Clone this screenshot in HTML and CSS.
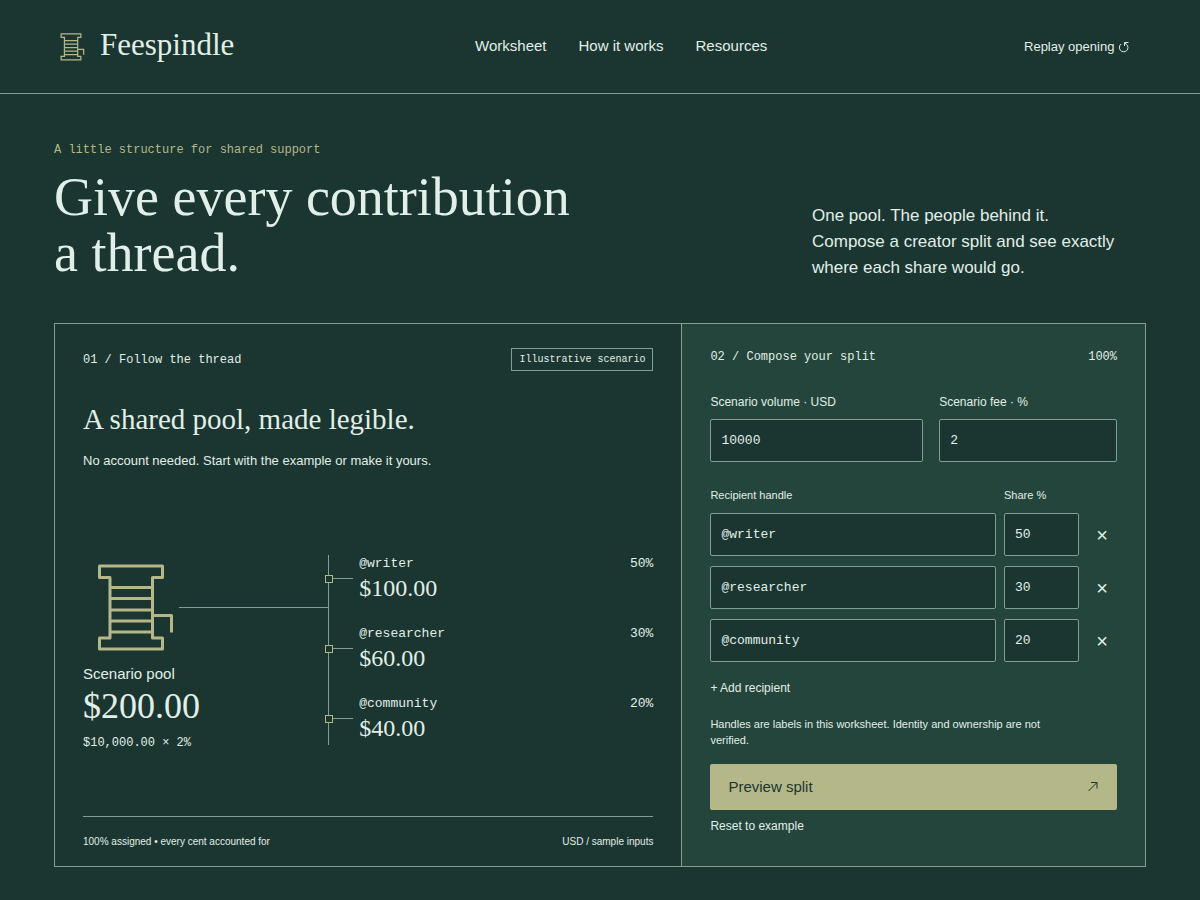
FILE: index.html
```html
<!DOCTYPE html>
<html lang="en">
<head>
<meta charset="utf-8">
<meta name="viewport" content="width=device-width, initial-scale=1">
<title>Feespindle</title>
<link rel="stylesheet" href="styles.css">
</head>
<body>
<header class="site-header">
  <a class="brand" href="#top">
    <svg class="brand-mark" viewBox="0 0 96 96" aria-hidden="true"><path d="M16.500 6H79.500V17.500H69.500V78H79.500V89H16.500V78H27V17.500H16.500ZM27 27.500H69.500M27 38.500H69.500M27 50H69.500M27 61H69.500M27 72H69.500M69.500 55.500H88.500V72.500"/></svg>
    <span>Feespindle</span>
  </a>
  <nav class="site-nav" aria-label="Main">
    <a href="#worksheet">Worksheet</a>
    <a href="#how">How it works</a>
    <a href="#resources">Resources</a>
  </nav>
  <button class="replay" type="button">Replay opening <svg viewBox="0 0 12 12" aria-hidden="true"><path d="M3.200 3A4.300 4.300 0 1 0 8.500 3.300L6.500 2M10.500 1.500H6.500V5"/></svg></button>
</header>
<main id="top">
  <section class="hero">
    <div>
      <p class="eyebrow">A little structure for shared support</p>
      <h1>Give every contribution<br>a thread.</h1>
    </div>
    <p class="lede">One pool. The people behind it.<br>Compose a creator split and see exactly where each share would go.</p>
  </section>
  <div class="workbench" id="worksheet">
    <section class="thread">
      <div class="thread-head">
        <span class="step">01 / Follow the thread</span>
        <span class="tag">Illustrative scenario</span>
      </div>
      <h2>A shared pool, made legible.</h2>
      <p class="intro">No account needed. Start with the example or make it yours.</p>
      <div class="diagram">
        <div class="pool">
          <div class="spool-row">
            <svg class="spool" viewBox="0 0 96 96" aria-hidden="true"><path d="M16.500 6H79.500V17.500H69.500V78H79.500V89H16.500V78H27V17.500H16.500ZM27 27.500H69.500M27 38.500H69.500M27 50H69.500M27 61H69.500M27 72H69.500M69.500 55.500H88.500V72.500"/></svg>
            <span class="feed"></span>
          </div>
          <span class="pool-label">Scenario pool</span>
          <strong class="pool-total">$200.00</strong>
          <span class="pool-math">$10,000.00 × 2%</span>
        </div>
        <ul class="branches">
          <li><span class="node"></span><div class="who"><span>@writer</span><span>50%</span></div><strong>$100.00</strong></li>
          <li><span class="node"></span><div class="who"><span>@researcher</span><span>30%</span></div><strong>$60.00</strong></li>
          <li><span class="node"></span><div class="who"><span>@community</span><span>20%</span></div><strong>$40.00</strong></li>
        </ul>
      </div>
      <div class="thread-foot"><span>100% assigned • every cent accounted for</span><span>USD / sample inputs</span></div>
    </section>
    <form class="composer">
      <div class="composer-head"><span>02 / Compose your split</span><output>100%</output></div>
      <div class="amounts">
        <label>Scenario volume · USD<input type="text" inputmode="decimal" value="10000"></label>
        <label>Scenario fee · %<input type="text" inputmode="decimal" value="2"></label>
      </div>
      <div class="recipients">
        <div class="row labels"><span id="h">Recipient handle</span><span id="s">Share %</span></div>
        <div class="row"><input type="text" aria-labelledby="h" value="@writer"><input type="text" aria-labelledby="s" value="50"><button type="button" aria-label="Remove @writer">×</button></div>
        <div class="row"><input type="text" aria-labelledby="h" value="@researcher"><input type="text" aria-labelledby="s" value="30"><button type="button" aria-label="Remove @researcher">×</button></div>
        <div class="row"><input type="text" aria-labelledby="h" value="@community"><input type="text" aria-labelledby="s" value="20"><button type="button" aria-label="Remove @community">×</button></div>
      </div>
      <button class="text-button" type="button">+ Add recipient</button>
      <p class="note">Handles are labels in this worksheet. Identity and ownership are not verified.</p>
      <button class="preview" type="button"><span>Preview split</span><svg viewBox="0 0 12 12" aria-hidden="true"><path d="M1.500 10L10 1.500M4 1.500H10V7.500"/></svg></button>
      <button class="text-button" type="reset">Reset to example</button>
    </form>
  </div>
</main>
</body>
</html>
```

FILE: styles.css
```css
:root {
  --ground: #1b3530;
  --panel: #24453c;
  --line: #7f9f93;
  --text: #e0efe7;
  --sage: #b4b888;
  --sans: "Liberation Sans", Arial, sans-serif;
  --mono: "Liberation Mono", "Courier New", monospace;
  --serif: "Liberation Serif", "Times New Roman", serif;
}
* { box-sizing: border-box; }
body {
  margin: 0;
  background: var(--ground);
  color: var(--text);
  font: 15px/24px var(--sans);
}
h1, h2, p, ul { margin: 0; padding: 0; font-weight: 400; }
strong { font-weight: 400; }
a { color: inherit; text-decoration: none; }
button { border: 0; padding: 0; background: none; color: inherit; font: inherit; cursor: pointer; }
svg { fill: none; stroke: currentColor; }

.site-header {
  display: flex;
  justify-content: space-between;
  align-items: center;
  padding: 25px 70px 28px 56px;
  border-bottom: 1px solid var(--line);
}
.brand { display: flex; align-items: center; gap: 14px; font: 31px/40px var(--serif); }
.brand-mark { width: 30px; height: 30px; color: var(--sage); stroke-width: 4; margin-top: 4px; }
.site-nav { display: flex; gap: 32px; padding-top: 2px; }
.replay { padding: 3px 0 0 16px; font-size: 13px; }
.replay svg { width: 12px; height: 12px; vertical-align: -2px; }

main { padding: 0 54px 33px; }
.hero {
  display: grid;
  grid-template-columns: 1fr 334px;
  align-items: end;
  padding: 47px 0 42px;
}
.eyebrow { font: 12px/18px var(--mono); color: var(--sage); margin-bottom: 10px; }
h1 { font: 54px/56px var(--serif); }
.lede { font-size: 17px; line-height: 26px; max-width: 310px; }

.workbench {
  display: grid;
  grid-template-columns: 627fr 464fr;
  border: 1px solid var(--line);
}
.thread { display: flex; flex-direction: column; padding: 24px 28px 16px; }
.thread-head { display: flex; justify-content: space-between; align-items: center; font: 12px/18px var(--mono); }
.tag { border: 1px solid var(--line); padding: 3px 7px; font-size: 10px; line-height: 15px; }
h2 { font: 29px/36px var(--serif); margin-top: 30px; }
.intro { font-size: 13px; line-height: 20px; margin-top: 14px; }
.diagram { display: grid; grid-template-columns: 245fr 325fr; margin-top: 84px; }
.pool { display: flex; flex-direction: column; }
.spool-row { display: flex; align-items: center; height: 105px; }
.spool { width: 96px; height: 96px; color: var(--sage); stroke-width: 3; stroke-linejoin: round; }
.feed { flex: 1; height: 1px; background: var(--line); }
.pool-label { line-height: 28px; }
.pool-total { font: 36px/36px var(--serif); }
.pool-math { font: 12px/18px var(--mono); margin-top: 10px; }
.branches { list-style: none; height: 190px; border-left: 1px solid var(--line); }
.branches li { position: relative; height: 70px; padding-left: 30px; }
.branches li::before { content: ""; position: absolute; left: 0; top: 23px; width: 24px; height: 1px; background: var(--line); }
.node { position: absolute; left: -4px; top: 20px; width: 8px; height: 8px; border: 1px solid var(--sage); background: var(--ground); }
.who { display: flex; justify-content: space-between; font: 13px/18px var(--mono); }
.branches strong { display: block; font: 24px/30px var(--serif); }
.thread-foot {
  display: flex;
  justify-content: space-between;
  margin-top: auto;
  border-top: 1px solid var(--line);
  padding-top: 16px;
  font-size: 10px;
  line-height: 17px;
}

.composer { background: var(--panel); border-left: 1px solid var(--line); padding: 24px 28px 31px; }
.composer-head { display: flex; justify-content: space-between; font: 12px/18px var(--mono); }
.amounts { display: grid; grid-template-columns: 213fr 178fr; gap: 16px; margin-top: 28px; }
.amounts label { display: block; min-width: 0; font-size: 12px; line-height: 16px; }
input {
  width: 100%;
  min-width: 0;
  height: 43px;
  padding: 0 10px;
  border: 1px solid var(--line);
  border-radius: 2px;
  background: var(--ground);
  color: var(--text);
  font: 13px/20px var(--mono);
}
.amounts input { display: block; margin-top: 9px; }
.recipients { display: grid; gap: 10px; margin-top: 25px; }
.row { display: grid; grid-template-columns: 1fr 75px 30px; gap: 8px; }
.row.labels { font-size: 11px; line-height: 16px; }
.row button { font-size: 20px; }
.text-button { display: block; font-size: 12px; line-height: 18px; }
.recipients + .text-button { margin-top: 17px; }
.note { font-size: 11px; line-height: 16px; margin-top: 19px; max-width: 360px; }
.preview {
  display: flex;
  justify-content: space-between;
  align-items: center;
  width: 100%;
  height: 46px;
  margin: 16px 0 7px;
  padding: 0 18px;
  border-radius: 2px;
  background: var(--sage);
  color: #1c3530;
}
.preview svg { width: 12px; height: 12px; }
```
